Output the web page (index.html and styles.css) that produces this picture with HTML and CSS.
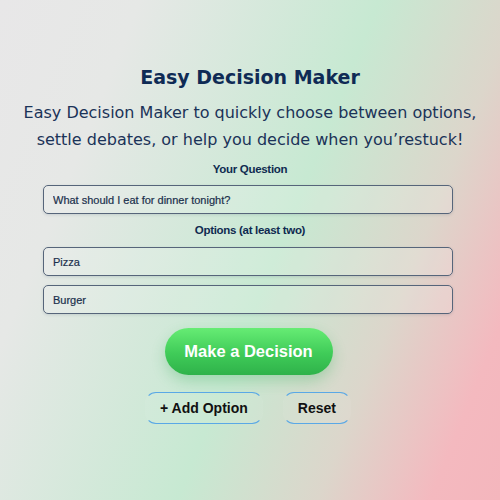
FILE: index.html
```html
<!DOCTYPE html>
<html lang="en">
<head>
<meta charset="utf-8">
<title>Easy Decision Maker</title>
<link rel="stylesheet" href="styles.css">
</head>
<body>
<main class="app">
  <h1 class="title">Easy Decision Maker</h1>
  <p class="subtitle">Easy Decision Maker to quickly choose between options, settle debates, or help you decide when you’restuck!</p>
  <label class="label" for="q">Your Question</label>
  <input class="field" id="q" type="text" value="What should I eat for dinner tonight?">
  <div class="label">Options (at least two)</div>
  <div class="options">
    <input class="field" type="text" value="Pizza">
    <input class="field" type="text" value="Burger">
  </div>
  <button class="decide" type="button">Make a Decision</button>
  <div class="actions">
    <button class="ghost" type="button">+ Add Option</button>
    <button class="ghost" type="button">Reset</button>
  </div>
</main>
</body>
</html>
```
FILE: styles.css
```css
html, body {
  margin: 0;
  height: 100%;
}
body {
  background: linear-gradient(112deg, #e8e7e8 0%, #e6e8e6 20%, #c7e9d2 54%, #dcd6cb 74%, #f4b9bf 90%, #f4b6bd 100%);
  font-family: "Liberation Sans", Arial, sans-serif;
  color: #0f2b52;
}
.app {
  display: flex;
  flex-direction: column;
  align-items: center;
  padding-top: 65px;
}
.title {
  margin: 0;
  font-family: "DejaVu Sans", sans-serif;
  font-weight: 700;
  font-size: 19px;
  line-height: 24px;
  color: #0f2b55;
}
.subtitle {
  margin: 10px 0 0;
  width: 470px;
  text-align: center;
  font-family: "DejaVu Sans", sans-serif;
  font-size: 16px;
  line-height: 27px;
  color: #1b3358;
}
.label {
  margin-top: 9px;
  font-size: 11.5px;
  line-height: 14px;
  font-weight: 700;
  letter-spacing: -0.3px;
  color: #0f2b50;
}
.field {
  box-sizing: border-box;
  width: 410px;
  height: 29px;
  margin: 9px 0 0 -4px;
  padding: 0 9px;
  border: 1.5px solid #56657a;
  border-radius: 5px;
  background: rgba(255, 255, 255, 0.15);
  box-shadow: 0 1px 3px rgba(40, 60, 90, 0.15);
  font-family: "Liberation Sans", Arial, sans-serif;
  font-size: 11px;
  color: #1a2f4c;
  -webkit-text-stroke: 0.2px #1a2f4c;
  outline: none;
}
.options {
  display: flex;
  flex-direction: column;
  align-items: center;
  margin-top: 1px;
}
.decide {
  margin: 14px 0 0 -3px;
  width: 168px;
  height: 47px;
  border: none;
  border-radius: 24px;
  background: linear-gradient(180deg, #66ec74 0%, #3fcb58 55%, #2fb24a 100%);
  box-shadow: 0 6px 14px rgba(46, 170, 80, 0.28);
  color: #ffffff;
  font-family: "Liberation Sans", Arial, sans-serif;
  font-weight: 700;
  font-size: 16.5px;
}
.actions {
  display: flex;
  gap: 20px;
  margin: 17px 0 0 -4px;
}
.ghost {
  height: 32px;
  padding: 0 14px;
  border: 1.5px solid transparent;
  border-top-color: #5aa8e6;
  border-bottom-color: #5aa8e6;
  border-radius: 11px;
  background: rgba(255, 255, 255, 0.06);
  color: #111111;
  font-family: "Liberation Sans", Arial, sans-serif;
  font-weight: 700;
  font-size: 14px;
}
```
